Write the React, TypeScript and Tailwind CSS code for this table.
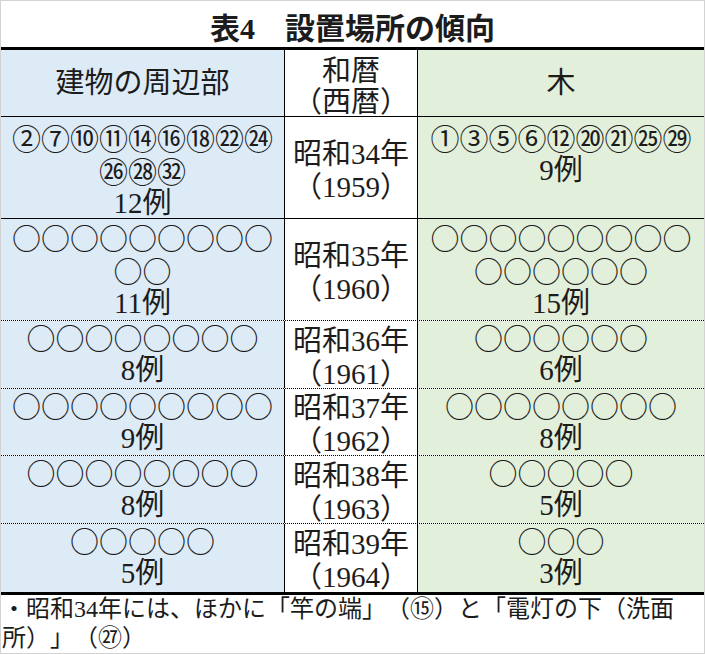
const CJK = "font-['Noto_Sans_CJK_JP',sans-serif]";

type Row = {
  h: string;
  pad: string;
  border: string;
  left: string[];
  era: [string, string];
  right: string[];
};

const ROWS: Row[] = [
  {
    h: "h-[102px]",
    pad: "pt-[4px]",
    border: "border-b border-solid",
    left: ["②⑦⑩⑪⑭⑯⑱㉒㉔", "㉖㉘㉜", "12例"],
    era: ["昭和34年", "（1959）"],
    right: ["①③⑤⑥⑫⑳㉑㉕㉙", "9例"],
  },
  {
    h: "h-[102px]",
    pad: "pt-[2px]",
    border: "border-b border-dotted",
    left: ["○○○○○○○○○", "○○", "11例"],
    era: ["昭和35年", "（1960）"],
    right: ["○○○○○○○○○", "○○○○○○", "15例"],
  },
  {
    h: "h-[68px]",
    pad: "",
    border: "border-b border-dotted",
    left: ["○○○○○○○○", "8例"],
    era: ["昭和36年", "（1961）"],
    right: ["○○○○○○", "6例"],
  },
  {
    h: "h-[67px]",
    pad: "",
    border: "border-b border-dotted",
    left: ["○○○○○○○○○", "9例"],
    era: ["昭和37年", "（1962）"],
    right: ["○○○○○○○○", "8例"],
  },
  {
    h: "h-[68px]",
    pad: "",
    border: "border-b border-dotted",
    left: ["○○○○○○○○", "8例"],
    era: ["昭和38年", "（1963）"],
    right: ["○○○○○", "5例"],
  },
  {
    h: "h-[68px]",
    pad: "",
    border: "",
    left: ["○○○○○", "5例"],
    era: ["昭和39年", "（1964）"],
    right: ["○○○", "3例"],
  },
];

// lines made only of circles / circled numbers use the CJK face (full width glyphs)
function Line({ text }: { text: string }) {
  const symbolic = !/例/.test(text);
  return (
    <div className={`leading-[33px] whitespace-nowrap ${symbolic ? CJK : ""}`}>
      {text}
    </div>
  );
}

export default function App() {
  return (
    <div className="w-[705px] h-[654px] flex flex-col bg-white border border-[#d3d3d3] text-[#1c1c1c] font-['Liberation_Serif','Noto_Sans_CJK_JP',serif] [text-spacing-trim:space-all]">
      {/* Title */}
      <div className="h-[46px] shrink-0 flex items-end justify-center pb-[3px] text-[30px] font-bold leading-none">
        表4　設置場所の傾向
      </div>

      {/* Table */}
      <div className="shrink-0 border-t-[3px] border-black text-[29px]">
        <div className="grid grid-cols-[284px_133px_1fr] h-[67px] border-b border-black">
          <div className="min-h-0 bg-[#ddebf7] border-r border-black flex items-center justify-center leading-[34px]">
            建物の周辺部
          </div>
          <div className="min-h-0 border-r border-black flex flex-col items-center justify-center pt-[8px] leading-[31px]">
            <div>和暦</div>
            <div>（西暦）</div>
          </div>
          <div className="min-h-0 bg-[#e2efda] flex items-center justify-center leading-[34px]">
            木
          </div>
        </div>

        {ROWS.map((r, i) => (
          <div
            key={i}
            className={`grid grid-cols-[284px_133px_1fr] border-black ${r.h} ${r.border}`}
          >
            <div className={`min-h-0 bg-[#ddebf7] border-r border-black flex flex-col items-center ${r.pad}`}>
              {r.left.map((t, j) => (
                <Line key={j} text={t} />
              ))}
            </div>
            <div className="min-h-0 border-r border-black flex flex-col items-center justify-center pt-[6px]">
              <div className="leading-[33px]">{r.era[0]}</div>
              <div className="leading-[33px]">{r.era[1]}</div>
            </div>
            <div className={`min-h-0 bg-[#e2efda] flex flex-col items-center ${r.pad}`}>
              {r.right.map((t, j) => (
                <Line key={j} text={t} />
              ))}
            </div>
          </div>
        ))}
      </div>

      {/* Footnote */}
      <div className="border-t-[3px] border-black flex-1 min-h-0 pl-[1px] text-[24px] leading-[29px]">
        <div className="whitespace-nowrap">
          ・昭和34年には、ほかに「竿の端」（⑮）と「電灯の下（洗面
        </div>
        <div className="whitespace-nowrap">所）」（㉗）</div>
      </div>
    </div>
  );
}
